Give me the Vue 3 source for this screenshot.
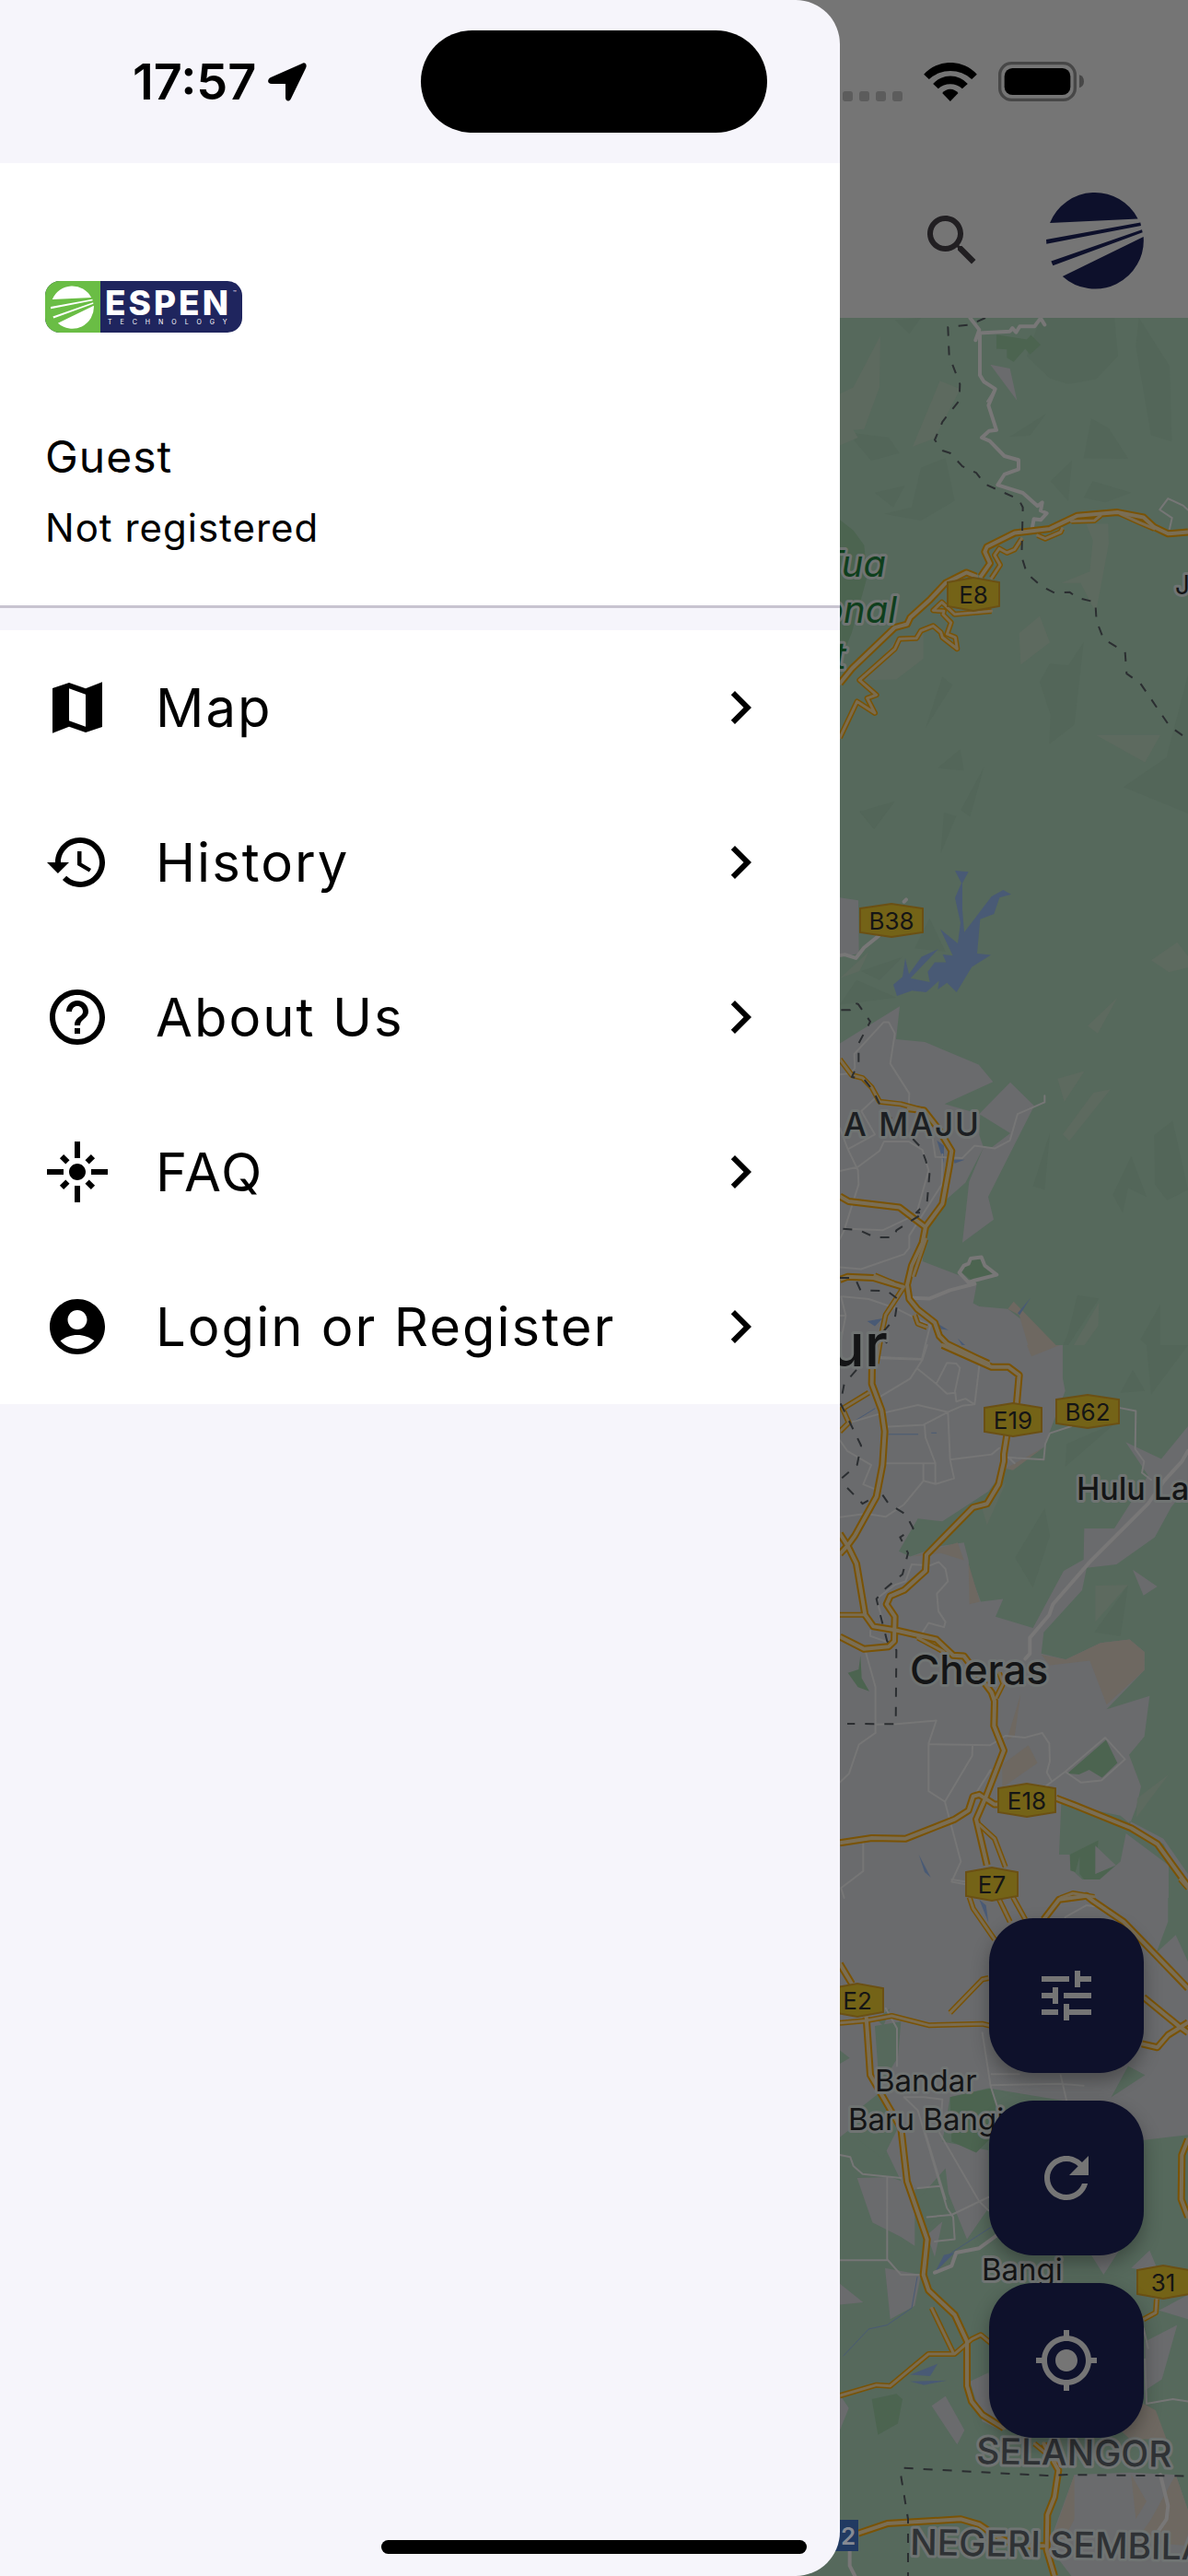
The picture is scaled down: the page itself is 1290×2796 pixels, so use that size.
<template>
  <div class="screen">
    <!-- Home page behind the drawer -->
    <header class="app-bar">
      <button class="icon-button" type="button" aria-label="Search">
        <svg class="icon" viewBox="0 0 24 24"><path :d="icons.search" /></svg>
      </button>
      <svg class="brand" viewBox="0 0 316 316" role="img" aria-label="Espen">
        <path :d="brandMark" />
      </svg>
    </header>

    <main class="map-area">
      <svg class="map" viewBox="0 345 1290 2451" preserveAspectRatio="xMaxYMin slice">
        <g v-for="tile in tiles" :key="tile.id" :transform="tile.transform">
          <path v-for="(area, i) in tile.areas" :key="i" :class="area[0]" :d="area[1]" />
        </g>
        <g v-for="layer in roadLayers" :key="layer.name">
          <g v-for="tile in tiles" :key="tile.id" :transform="tile.transform">
            <path class="line" :class="layer.name" :d="tile[layer.source]" />
          </g>
        </g>

        <g v-for="s in shields" :key="s.text" class="shield">
          <polygon :points="shieldPoints(s)" />
          <text :x="s.x" :y="s.y + 10">{{ s.text }}</text>
        </g>
        <g class="route">
          <rect x="900" y="2735" width="32" height="34" />
          <text x="921" y="2762">2</text>
        </g>

        <text
          v-for="l in labels"
          :key="l.text + l.y"
          class="label"
          :class="l.kind"
          :x="l.x"
          :y="l.y"
          :transform="l.tilt ? `rotate(${l.tilt} ${l.x} ${l.y})` : null"
        >{{ l.text }}</text>
      </svg>

      <div class="fabs">
        <button v-for="f in fabs" :key="f.icon" class="fab" type="button" :aria-label="f.label">
          <svg class="icon" viewBox="0 0 24 24"><path :d="icons[f.icon]" /></svg>
        </button>
      </div>
    </main>

    <!-- Drawer -->
    <aside class="drawer">
      <div class="profile">
        <svg class="logo" viewBox="0 0 214 56" role="img" aria-label="Espen Technology">
          <rect width="214" height="56" rx="16" fill="#1f255e" />
          <path d="M16 0H60V56H16A16 16 0 0 1 0 40V16A16 16 0 0 1 16 0z" fill="#6abd45" />
          <svg x="6" y="5" width="47" height="47" viewBox="0 0 316 316">
            <path :d="brandMark" fill="#fff" />
          </svg>
          <text class="logo-name" x="65" y="37">ESPEN</text>
          <text class="logo-sub" x="68" y="47">TECHNOLOGY</text>
          <text class="logo-tm" x="204" y="15">™</text>
        </svg>
        <h1 class="name">Guest</h1>
        <p class="status">Not registered</p>
      </div>

      <nav class="menu">
        <a v-for="item in menu" :key="item.label" class="menu-item" href="#">
          <svg class="icon" viewBox="0 0 24 24"><path :d="icons[item.icon]" /></svg>
          <span class="menu-label">{{ item.label }}</span>
          <svg class="icon" viewBox="0 0 24 24"><path :d="icons.chevron" /></svg>
        </a>
      </nav>
      <div class="home-indicator"></div>
    </aside>

    <!-- System status bar -->
    <div class="status-bar">
      <div class="clock">
        <span>17:57</span>
        <svg class="arrow" viewBox="0 0 42 42">
          <path d="M37 1C40-1 43 2 41 6L25 39C23 43 19 42 19 38V23H4C-1 23-1 18 3 16z" />
        </svg>
      </div>
      <div class="island"></div>
      <div class="signals">
        <div class="dots"><i v-for="n in 4" :key="n"></i></div>
        <svg class="wifi" viewBox="0 0 173 126">
          <path d="M0 38A117 117 0 0 1 173 38L156 54A103 103 0 0 0 17 54z" />
          <path d="M30 69A76 76 0 0 1 143 69L125 85A58 58 0 0 0 47 85z" />
          <path d="M60 99A33 33 0 0 1 112 99L86 126z" />
        </svg>
        <svg class="battery" viewBox="0 0 279 129">
          <rect x="5" y="5" width="245" height="119" rx="38" fill="none" stroke="#474747" stroke-width="10" />
          <rect x="20" y="21" width="215" height="87" rx="26" />
          <path d="M264 43Q279 48 279 64T264 85z" fill="#474747" />
        </svg>
      </div>
    </div>
  </div>
</template>

<script setup>
const icons = {
  search: 'M15.5 14h-.79l-.28-.27C15.41 12.59 16 11.11 16 9.5 16 5.91 13.09 3 9.5 3S3 5.91 3 9.5 5.91 16 9.5 16c1.61 0 3.09-.59 4.23-1.57l.27.28v.79l5 4.99L20.49 19l-4.99-5zm-6 0C7.01 14 5 11.99 5 9.5S7.01 5 9.5 5 14 7.01 14 9.5 11.99 14 9.5 14z',
  map: 'M15 5.1L9 3 3 5.02v16.2l6-2.33 6 2.1 6-2.02V2.77L15 5.1zm0 13.79l-6-2.11V5.11l6 2.11v11.67z',
  history: 'M13 3c-4.97 0-9 4.03-9 9H1l3.89 3.89.07.14L9 12H6c0-3.87 3.13-7 7-7s7 3.13 7 7-3.13 7-7 7c-1.93 0-3.68-.79-4.94-2.06l-1.42 1.42C8.27 19.99 10.51 21 13 21c4.97 0 9-4.03 9-9s-4.03-9-9-9zm-1 5v5l4.28 2.54.72-1.21-3.5-2.08V8H12z',
  help: 'M11 18h2v-2h-2v2zm1-16C6.48 2 2 6.48 2 12s4.48 10 10 10 10-4.48 10-10S17.52 2 12 2zm0 18c-4.41 0-8-3.59-8-8s3.59-8 8-8 8 3.59 8 8-3.59 8-8 8zm0-14c-2.21 0-4 1.79-4 4h2c0-1.1.9-2 2-2s2 .9 2 2c0 2-3 1.75-3 5h2c0-2.25 3-2.5 3-5 0-2.21-1.79-4-4-4z',
  flare: 'M7 11H1v2h6v-2zm2.17-3.24L7.05 5.64 5.64 7.05l2.12 2.12 1.41-1.41zM13 1h-2v6h2V1zm5.36 6.05l-1.41-1.41-2.12 2.12 1.41 1.41 2.12-2.12zM17 11v2h6v-2h-6zm-5-2c-1.66 0-3 1.34-3 3s1.34 3 3 3 3-1.34 3-3-1.34-3-3-3zm2.83 7.24l2.12 2.12 1.41-1.41-2.12-2.12-1.41 1.41zm-9.19.71l1.41 1.41 2.12-2.12-1.41-1.41-2.12 2.12zM11 23h2v-6h-2v6z',
  account: 'M12 2C6.48 2 2 6.48 2 12s4.48 10 10 10 10-4.48 10-10S17.52 2 12 2zm0 4c1.93 0 3.5 1.57 3.5 3.5S13.93 13 12 13s-3.5-1.57-3.5-3.5S10.07 6 12 6zm0 14c-2.03 0-4.43-.82-6.14-2.88C7.55 15.8 9.68 15 12 15s4.45.8 6.14 2.12C16.43 19.18 14.03 20 12 20z',
  chevron: 'M10 6L8.59 7.41 13.17 12l-4.58 4.59L10 18l6-6z',
  tune: 'M3 17v2h6v-2H3zM3 5v2h10V5H3zm10 16v-2h8v-2h-8v-2h-2v6h2zM7 9v2H3v2h4v2h2V9H7zm14 4v-2H11v2h10zm-6-4h2V7h4V5h-4V3h-2v6z',
  refresh: 'M17.65 6.35C16.2 4.9 14.21 4 12 4c-4.42 0-7.99 3.58-7.99 8s3.57 8 7.99 8c3.73 0 6.84-2.55 7.73-6h-2.08c-.82 2.33-3.04 4-5.65 4-3.31 0-6-2.69-6-6s2.69-6 6-6c1.66 0 3.14.69 4.22 1.78L13 11h7V4l-2.35 2.35z',
  locate: 'M12 8c-2.21 0-4 1.79-4 4s1.79 4 4 4 4-1.79 4-4-1.79-4-4-4zm8.94 3c-.46-4.17-3.77-7.48-7.94-7.94V1h-2v2.06C6.83 3.52 3.52 6.83 3.06 11H1v2h2.06c.46 4.17 3.77 7.48 7.94 7.94V23h2v-2.06c4.17-.46 7.48-3.77 7.94-7.94H23v-2h-2.06zM12 19c-3.87 0-7-3.13-7-7s3.13-7 7-7 7 3.13 7 7-3.13 7-7 7z',
}

const brandMark =
  'M12 101A157 157 0 0 1 297 88zM0 155L305 100 307 110 1 169zM16 225L310 123 312 132 22 239zM53 274L315 146A157 157 0 0 1 53 274z'

const menu = [
  { label: 'Map', icon: 'map' },
  { label: 'History', icon: 'history' },
  { label: 'About Us', icon: 'help' },
  { label: 'FAQ', icon: 'flare' },
  { label: 'Login or Register', icon: 'account' },
]

const fabs = [
  { label: 'Filter', icon: 'tune' },
  { label: 'Refresh', icon: 'refresh' },
  { label: 'My location', icon: 'locate' },
]

// every road is a wide casing with a narrower fill on top
const roadLayers = [
  { name: 'river', source: 'river' },
  { name: 'street', source: 'streets' },
  { name: 'avenue', source: 'avenues' },
  { name: 'road-casing', source: 'roads' },
  { name: 'highway-casing', source: 'highways' },
  { name: 'road-fill', source: 'roads' },
  { name: 'highway-fill', source: 'highways' },
  { name: 'border', source: 'borders' },
]

const tiles = [
  {
    id: 'north',
    transform: 'translate(900 340) scale(.33333 .35714)',
    areas: [
      ['dim', 'M216 20L300 14 262 62zM60 362L195 378 230 425 138 448zM690 14H930L942 130 870 200 780 215 720 198 645 130zM1010 14L1110 160 1117 390 1050 370 1000 100zM855 320L912 350 975 442 830 440zM722 510L792 448 780 570zM300 470L380 440 410 570 300 630 180 610 270 590zM150 545L247 524 210 590zM860 510L985 545 900 575 830 560zM590 375L708 305 655 372zM687 1120L720 1065 780 1070 830 1000 800 1250 718 1310 722 1220zM370 1105L403 1130 315 1260zM960 1440L1100 1350 1170 1100V1520zM355 1382L428 1325 440 1390zM430 1510L505 1380 460 1530zM100 1515L215 1483 148 1568z'],
      ['pale', 'M36 245L80 225 168 68 165 225 115 352 80 355 95 378 36 402zM362 205L428 230 345 380 273 405zM757 820L850 785 860 690 838 640 910 640 912 700 870 910 820 820zM620 972L687 920 720 1000 625 1068zM870 1282L1080 1282 1030 1365zM115 1115L220 990 308 975 308 1050 220 1113z'],
      ['park', 'M546 65L645 80 658 66 690 96 655 125 640 108 602 148 580 135 580 110 546 108zM36 628L80 660 115 705 125 800 75 970 36 1060z'],
      ['urban', 'M526 156L590 168 613 265z'],
    ],
    streets: 'M1110 655L1118 622 1078 597 1105 563 1155 585 1170 598M505 208L542 230 516 268',
    avenues: 'M460 14L490 50 478 82M490 60L590 55 598 45 610 58 622 40 670 40 690 15 703 35M492 60V188L505 208 542 230 520 280 546 355 522 358 498 378 524 388 572 434 618 446V474L572 490 550 522 632 546 680 586 695 575 690 600 710 608 690 628 668 625 662 655',
    roads: 'M530 805L558 765 540 735 555 715 580 728 605 718 628 685M680 675L705 685 755 665 760 655M530 905L410 915 368 878 340 903 375 905 372 915 398 940 385 975 412 985 418 1020 370 985 365 970 340 950 300 965 285 988 230 990 215 1020 100 1115 155 1160 125 1170 150 1215 92 1180 36 1290M790 632L865 630 885 615M950 610L1010 635 1060 655',
    highways: 'M36 1125L75 1080 215 955 255 945 265 925 330 870 380 820 448 788 480 800M495 800L525 760 508 725 515 710 605 668 720 655 810 615 940 605 1025 620 1060 650 1105 670 1170 665',
    river: '',
    borders: 'M510 14L460 35 388 42 392 130 427 215 425 265 370 330 345 385 372 418 395 425 435 465 480 485 510 520 618 565 632 590 628 740 645 790 690 828 735 850 785 848 810 865 868 878 872 935 895 990 965 1030 970 1095 1015 1125 1110 1255 1170 1295',
  },
  {
    id: 'ampang',
    transform: 'translate(900 880) scale(.33333 .38265)',
    areas: [
      ['dim', 'M985 980L1035 1095 975 1070 957 1140 925 1090zM665 1065L720 915 703 1075zM1060 920L1120 880 1170 1075 1102 1105 1062 1060zM810 1374L880 1384 740 1568 780 1480zM375 5L415 15 365 120zM328 305L380 400 280 390zM36 550L90 480 220 530zM105 455L240 415 165 480zM100 0H190L145 50zM1015 1500L1080 1400 1080 1550z'],
      ['pale', 'M36 475L130 400 100 455zM1050 424L1135 373 1170 412V445L1108 458zM843 610L940 530 876 632zM745 760L833 738 767 826zM762 918L862 800 918 790 783 937zM762 1568L880 1395 878 1460 790 1568z'],
      ['urban', 'M36 246L96 254 98 405 36 415zM36 660L231 555 219 648 313 656 488 720 535 769 377 832 490 860 591 770 669 837 519 1095 537 1160 435 1225 457 1052 504 955 445 1055 380 1105 320 1180 305 1278 430 1320 482 1342 470 1397 490 1406 583 1413 740 1520 762 1515V1568H36z'],
      ['green', 'M493 862L591 915 530 955 504 955 490 920z'],
      ['sand', 'M583 1413L602 1392 742 1518 660 1548 620 1430z'],
      ['park', 'M425 1305L460 1272 490 1270 545 1315 470 1335z'],
      ['water', 'M411 170L455 173 435 205 435 280 441 345 530 243 568 225 594 237 556 246 538 293 493 308 483 405 528 409 466 443 416 515 385 488 355 507 359 482 317 515 271 510 222 525 210 493 240 471 249 418 261 463 302 414 357 392 266 475 329 486 322 457 345 430 382 430 371 408 404 411 363 336 420 376 429 318 411 247 432 205zM352 935L375 950 375 1000zM405 990L443 990 410 1000zM615 1425L657 1382 622 1430zM125 1448L175 1440 150 1462zM355 1455L390 1473 365 1470zM420 1497L465 1532 440 1525z'],
    ],
    streets: 'M36 748L70 745 85 730 83 690 178 600 195 600 215 632 200 717 262 802 260 850M106 852L155 812M106 852L150 918 62 960 36 900M62 960L95 1020 97 1060 50 1190 36 1215M36 1022L95 1010 165 965 180 938 260 938 305 962 325 1020 285 1145 175 1190 50 1185M335 910L347 982 435 985 475 950 540 958 590 935 615 860 703 827V808M370 975L368 1060 262 1205 262 1240 245 1258 105 1300 36 1295M40 1378L55 1432 40 1500M45 1378L130 1385 220 1412 330 1460 303 1555 160 1550M36 1432H55',
    avenues: 'M36 410L52 408 88 418 115 388 162 355M245 258L252 252M270 1382L327 1384 395 1360 475 1342M455 1338L425 1310 440 1290 455 1285 462 1270 497 1266 508 1290 547 1316 475 1332 455 1338',
    roads: 'M36 705L75 750 110 758 140 785 165 825 235 832 310 850M245 1350L185 1430 170 1490 155 1568M280 1430L290 1455 320 1465M150 1318L210 1340M316 1215L275 1320',
    highways: 'M260 845L310 850 355 900 400 965 392 1010 370 1115 315 1180 305 1225 270 1290 255 1345 262 1385 290 1415 345 1452 360 1490 385 1512 480 1552 520 1568M36 1094L65 1108 230 1125 310 1178M36 1330L60 1322 145 1325 240 1350',
    river: '',
    borders: 'M40 565H70L80 545 95 548 135 598 97 660V715L75 755 115 762 145 795 175 850 240 900 300 955 315 990 328 1030 320 1110 285 1140 310 1140 220 1190 212 1210 150 1210 100 1190 40 1185M36 1325L85 1325 103 1360 190 1362 225 1385 215 1440 165 1490 190 1510',
  },
  {
    id: 'cheras',
    transform: 'translate(900 1460) scale(.33333 .38265)',
    areas: [
      ['urban', 'M36 0H765L1170 230V1568H36z'],
      ['green', 'M762 0V95L770 130 700 290 590 350 575 350 520 415 370 500 290 492 228 585 265 600 365 570 440 560 455 610 458 640 495 728 568 720 543 770 665 802 765 640 830 608 832 520 930 520 1040 370 967 275 1083 323 1170 230V0zM1170 400L1115 460 1062 545 937 622 840 632 825 695 700 815 692 875 772 892 885 845 980 835 1028 870V922L905 1033 1045 995 1028 1110 978 1162 1017 1252 1002 1310 980 1360 1090 1415 1170 1550zM757 1300L950 1335 985 1360 968 1385 950 1465 853 1538 800 1495 785 1445 750 1445zM968 1385L980 1350 1090 1400 1170 1500V1568H1107V1475z'],
      ['dim', 'M703 463L720 540 665 688 607 603zM975 680L950 825 865 815zM990 70L1030 130 950 135zM775 280L935 220 770 345zM1035 0H1170L1050 140z'],
      ['pale', 'M868 682L975 680 868 785zM1002 1340L1005 1285 1107 1218zM495 450L578 388 515 510z'],
      ['sand', 'M272 600L420 560 440 610 365 590zM455 620L492 728 458 735zM575 350L700 290 600 355zM692 878L772 892 885 845 980 835 1028 870V922L905 1020 850 895 720 908zM565 1190L650 1135 680 1185 565 1255zM645 0L752 0 660 32zM580 1120L625 990 605 1110z'],
      ['park', 'M103 880L107 945 132 982 95 970 62 930 97 920zM777 1215L903 1120 940 1185 890 1227 848 1205 815 1218zM785 1445L878 1405 868 1500 930 1478 853 1538 817 1500 817 1450 803 1495 787 1490z'],
      ['urban', 'M990 637L1070 685 1025 710zM868 1420L935 1475 868 1500z'],
      ['water', 'M293 1445L332 1510 312 1495z'],
    ],
    streets: 'M160 37L305 41 320 0M160 150L265 95 305 41M290 68L350 110 385 50 415 52 427 65 410 135 385 138 350 110M412 135L415 160 445 152 475 168 490 60M75 218L165 195 290 170 388 190M388 190L435 172 475 168M388 190L395 325 408 378 348 394 308 385 308 335M310 225L388 190M180 232L312 226 315 262 347 335V392M185 335H347M395 325L530 310 555 292M308 385L245 452 185 487 120 478 36 488M36 270L60 300 138 340 112 395 155 410M948 178L1000 187 998 295 1027 330 1020 362 1050 382M790 230L720 250 705 280 700 325 650 322 610 320 585 318 605 335M305 815L325 788 375 800 380 785 357 755 352 705 388 670 380 635 358 615 330 625 270 622 250 670 215 680 155 720 175 780M120 870L152 970V1100L98 1133 66 1215 36 1240M152 1076L220 1075 350 1065 325 1130V1265L378 1295 430 1465 400 1522 450 1530M325 1132L525 1135 575 1108 640 1113 695 1100 718 1130 720 1180 710 1212 725 1235M468 1137L467 1165 378 1295M480 1270L527 1205M690 1262L770 1210 900 1113 965 1175 888 1235 822 1241 770 1210M112 1412V1492L40 1540 50 1568M135 810V825L190 842',
    avenues: 'M1170 300L1150 330 1092 385 1040 450 850 615 730 735 718 765 655 830V875L640 890',
    roads: 'M545 1000L568 960 555 930M490 1360L540 1400 575 1480M130 135L45 180 65 220 36 245M290 830L375 870M755 1568L795 1555 865 1565M36 765H118',
    highways: 'M370 0L530 62 585 62 620 85 612 165M580 255L570 310 570 330 553 395 515 450 470 460 318 595 315 640 245 695 200 712 188 735 215 770 213 840 195 855 115 862 36 827M142 0L140 110 172 185 182 245 175 340 155 430 85 540 60 570 36 592M36 535L62 570 90 620 118 765 145 798 215 808 350 835 405 880 440 882 530 985 540 1010 538 1080 570 1150 510 1285 480 1345 515 1475M36 1412L140 1398 250 1400 410 1345 455 1320 470 1280 490 1275 540 1303 555 1303M740 1285L800 1305 985 1370 1070 1415 1170 1535',
    river: 'M195 253H290M335 249H350M75 220L150 180',
    borders: 'M90 70L50 110 38 165 105 285 92 340 36 382M60 405L110 450 150 430M175 425L195 450 250 480 275 520 232 545 258 590 240 650 185 690 155 720 175 790 190 840 220 865 218 1075 60 1074',
  },
  {
    id: 'bangi',
    transform: 'translate(900 2040) scale(.33333 .48214)',
    areas: [
      ['urban', 'M36 0H1105V95L1067 165 1130 125 1170 185V575L985 590 870 600 780 500 520 470 395 490 370 590 520 610V740L450 810 380 690 250 700 180 600 110 540 36 580z'],
      ['green', 'M150 330L235 320 225 400 165 470zM36 385L68 402 36 415zM110 510L165 480 225 560 175 628 95 585zM265 740L380 650 395 740 310 790zM200 290L178 330 155 315zM920 490L975 420 1030 440z'],
      ['park', 'M395 490L530 470 560 560 480 615 400 590zM140 1170L220 1158 240 1170 225 1225 160 1250z'],
      ['urban', 'M92 672L200 670 280 690 280 825 235 805 142 772zM183 875L300 890 280 960 200 990zM335 1185L380 1163 442 1240 418 1272zM36 910L112 952 36 957zM320 800L370 770 345 850zM460 1130L520 1110 560 1240 500 1220zM1030 1040L1135 1003 1085 1125 1030 1150zM1075 970L1170 935V990zM850 840L895 890 960 820zM985 875L1045 835 1075 885zM800 1340L980 1335 1130 1340 1170 1420V1568H790L715 1500zM36 1160L65 1190 36 1240z'],
      ['sand', 'M1025 1180L1065 1195 1100 1260 980 1260 950 1240zM720 1500L800 1340 800 1440 770 1480zM985 1340L1035 1400 1000 1440zM1130 1340L1170 1420V1500L1000 1490 1050 1440z'],
      ['water', 'M490 45L512 58 520 97zM265 1115L355 1090 330 1118zM265 1130L385 1128 310 1138zM345 885L375 845 410 840z'],
    ],
    streets: 'M222 420V335L185 290M500 345L527 465 590 600M527 463L750 460 830 464M530 438H620M755 440L775 500M36 620L70 625 80 645 110 663 235 672M190 670V855L235 890H295M36 857H190M245 490L290 520 385 740 405 760 410 810 345 815M320 760L400 755 520 715M360 570L490 725 520 745M290 695L365 690M310 560L380 720M1030 1080L1035 1180 1120 1170 1170 1175M1025 1010L1040 1055M400 0L490 10M770 85L840 58 885 62M245 490H310L370 495 365 540',
    avenues: 'M345 885L400 870 415 840 490 830 550 800M1080 1340L1105 1410 1100 1440 1070 1470M68 1500V1545L85 1568',
    roads: 'M395 300L500 225 520 222M458 40L470 65 540 135M555 45L590 95M600 40L640 90M36 323L120 318 205 307 325 328 500 325 530 330M1068 945L1065 975 1025 990M530 1045L495 1025 465 1035 410 1068 325 1068 200 1140 155 1138 36 1162M335 965L405 1065M670 1270L740 1310M1145 0L1170 20',
    highways: 'M36 190L75 235M122 310L135 440 235 560 255 680 320 810 308 890 325 925 410 980 450 1040V1140L465 1175 500 1205 570 1235M700 1270L748 1330 735 1390 712 1430 710 1510 735 1568M700 90L750 45 840 37 860 48 960 95 1170 245M1025 265L1140 330 1170 345M1020 370L1070 378 1105 350 1170 322M1170 585L1150 620 1148 720 1170 760M96 1472L190 1450 430 1440 490 1452 550 1480 610 1500 700 1500',
    river: 'M48 1072L130 1012 190 1003 270 965 288 895M345 885L400 840 530 782',
    borders: 'M245 1325L710 1342 775 1340 1170 1343M235 1343L258 1440V1568',
  },
]

const shields = [
  { text: 'E8', x: 1057, y: 645, w: 56 },
  { text: 'B38', x: 968, y: 999, w: 68 },
  { text: 'E19', x: 1100, y: 1541, w: 62 },
  { text: 'B62', x: 1181, y: 1532, w: 68 },
  { text: 'E18', x: 1115, y: 1954, w: 62 },
  { text: 'E7', x: 1077, y: 2045, w: 56 },
  { text: 'E2', x: 931, y: 2171, w: 56 },
  { text: '31', x: 1263, y: 2477, w: 56 },
]

const shieldPoints = ({ x, y, w }) => {
  const l = x - w / 2
  const r = x + w / 2
  return `${l},${y - 13} ${x},${y - 18} ${r},${y - 13} ${r},${y + 13} ${x},${y + 18} ${l},${y + 13}`
}

const labels = [
  { text: 'Tua', x: 962, y: 626, kind: 'forest' },
  { text: 'National', x: 974, y: 676, kind: 'forest' },
  { text: 'Forest', x: 919, y: 726, kind: 'forest' },
  { text: 'J', x: 1276, y: 645, kind: 'small' },
  { text: 'A MAJU', x: 1065, y: 1233, kind: 'district' },
  { text: 'Kuala Lumpur', x: 964, y: 1483, kind: 'city' },
  { text: 'Hulu Langat', x: 1169, y: 1628, kind: 'town' },
  { text: 'Cheras', x: 988, y: 1828, kind: 'suburb' },
  { text: 'Bandar', x: 950, y: 2270, kind: 'village' },
  { text: 'Baru Bangi', x: 921, y: 2312, kind: 'village' },
  { text: 'Bangi', x: 1066, y: 2475, kind: 'village' },
  { text: 'SELANGOR', x: 1060, y: 2674, kind: 'state', tilt: 1 },
  { text: 'NEGERI SEMBILAN', x: 988, y: 2773, kind: 'state', tilt: 1 },
]
</script>

<style>
body {
  background: #757575;
}
</style>

<style scoped>
.screen {
  position: relative;
  display: flex;
  flex-direction: column;
  min-height: 100vh;
  overflow: hidden;
  font-family: Inter, "Liberation Sans", sans-serif;
  color: #000;
}

.icon {
  flex: none;
  display: block;
  width: 72px;
  height: 72px;
  fill: currentColor;
}

/* App bar */
.app-bar {
  display: flex;
  align-items: center;
  justify-content: flex-end;
  gap: 66px;
  padding: 208px 48px 31px;
  background: #757575;
}

.icon-button {
  padding: 0;
  border: 0;
  background: none;
  color: #211f22;
}

.brand {
  width: 106px;
  height: 106px;
  fill: #0d102b;
}

/* Map */
.map-area {
  position: relative;
  flex: 1;
  display: flex;
  align-items: flex-end;
  justify-content: flex-end;
  padding: 48px 48px 150px;
  background: #56695c;
}

.map {
  position: absolute;
  inset: 0;
  width: 100%;
  height: 100%;
}

.green { fill: #56695c; }
.dim { fill: #536659; }
.pale { fill: #5d6a5f; }
.park { fill: #4c6450; }
.urban { fill: #6a6b6d; }
.sand { fill: #6e6861; }
.water { fill: #495a75; }

.line {
  fill: none;
  stroke-linecap: round;
  stroke-linejoin: round;
  vector-effect: non-scaling-stroke;
}

.river { stroke: #495a75; stroke-width: 1px; }
.street { stroke: #767676; stroke-width: 2px; }
.avenue { stroke: #787777; stroke-width: 4px; }
.road-casing { stroke: #7a5305; stroke-width: 6px; stroke-linecap: butt; }
.road-fill { stroke: #7a6c50; stroke-width: 3px; }
.highway-casing { stroke: #7a5305; stroke-width: 8px; stroke-linecap: butt; }
.highway-fill { stroke: #7a6e55; stroke-width: 4px; }
.border {
  stroke: #2b2e31;
  stroke-width: 2px;
  stroke-dasharray: 10 11;
  stroke-linecap: butt;
}

.shield polygon {
  fill: #746317;
  stroke: #6b5014;
  stroke-width: 2px;
}

.shield text {
  fill: #151515;
  font-size: 26px;
  text-anchor: middle;
}

.route rect { fill: #213a62; }
.route text {
  fill: #868a93;
  font-size: 26px;
  font-weight: 600;
  text-anchor: middle;
}

.label {
  fill: #141516;
  stroke: #707473;
  stroke-width: 6px;
  stroke-linejoin: round;
  paint-order: stroke;
  font-size: 34px;
}

.label.forest {
  fill: #0f3f1d;
  font-size: 40px;
  font-style: italic;
  text-anchor: end;
}

.label.small { font-size: 28px; }
.label.town { font-weight: 500; }
.label.village { font-size: 33px; }
.label.district {
  fill: #1c1f22;
  font-size: 35px;
  font-weight: 500;
  letter-spacing: 2px;
  text-anchor: end;
}
.label.city {
  font-size: 65px;
  font-weight: 500;
  text-anchor: end;
}
.label.suburb {
  font-size: 44px;
  font-weight: 500;
}
.label.state {
  fill: #2f3235;
  font-size: 39px;
  font-weight: 500;
}

.fabs {
  position: relative;
  display: flex;
  flex-direction: column;
  gap: 30px;
}

.fab {
  display: grid;
  place-items: center;
  width: 168px;
  height: 168px;
  padding: 0;
  border: 0;
  border-radius: 48px;
  background: #0e112b;
  color: #757575;
  box-shadow: 0 9px 20px rgba(0, 0, 0, 0.3);
}

/* Drawer */
.drawer {
  position: absolute;
  top: 0;
  bottom: 0;
  left: 0;
  display: flex;
  flex-direction: column;
  width: 912px;
  max-width: 90%;
  box-sizing: border-box;
  padding-top: 177px;
  border-radius: 0 48px 48px 0;
  background: #f6f5fb;
  overflow: hidden;
}

.profile {
  padding: 128px 49px 56px;
  border-bottom: 3px solid #c8c4d0;
  background: #fff;
}

.logo {
  display: block;
  width: 214px;
  height: 56px;
}

.logo text { fill: #fff; }
.logo-name {
  font-size: 37px;
  font-weight: 800;
  letter-spacing: 3px;
}
.logo-sub {
  font-size: 7px;
  letter-spacing: 9px;
}
.logo-tm { font-size: 6px; }

.name {
  margin: 103px 0 0;
  font-size: 48px;
  font-weight: 400;
  line-height: 64px;
  letter-spacing: 1px;
}

.status {
  margin: 17px 0 0;
  font-size: 42px;
  line-height: 56px;
  letter-spacing: 1px;
}

.menu {
  margin-top: 24px;
  background: #fff;
}

.menu-item {
  display: flex;
  align-items: center;
  gap: 49px;
  height: 168px;
  padding: 0 72px 0 48px;
  color: #000;
  text-decoration: none;
}

.menu-label {
  flex: 1;
  font-size: 58px;
  letter-spacing: 2px;
}

.home-indicator {
  width: 462px;
  height: 15px;
  margin: auto 36px 24px auto;
  border-radius: 8px;
  background: #000;
}

/* Status bar */
.status-bar {
  position: absolute;
  top: 0;
  left: 0;
  right: 0;
  display: grid;
  grid-template-columns: 1fr auto 1fr;
  align-items: center;
  height: 177px;
  pointer-events: none;
}

.clock {
  display: flex;
  align-items: center;
  gap: 13px;
  padding-left: 144px;
  font-size: 54px;
  font-weight: 600;
}

.arrow {
  width: 42px;
  height: 42px;
}

.island {
  width: 376px;
  height: 111px;
  border-radius: 56px;
  background: #000;
}

.signals {
  display: flex;
  align-items: flex-end;
  justify-content: flex-end;
  gap: 23px;
  padding-right: 113px;
}

.dots {
  display: flex;
  gap: 7px;
}

.dots i {
  width: 11px;
  height: 11px;
  border-radius: 3px;
  background: #5c5c5c;
}

.wifi {
  width: 58px;
  height: 42px;
}

.battery {
  width: 93px;
  height: 43px;
}
</style>
